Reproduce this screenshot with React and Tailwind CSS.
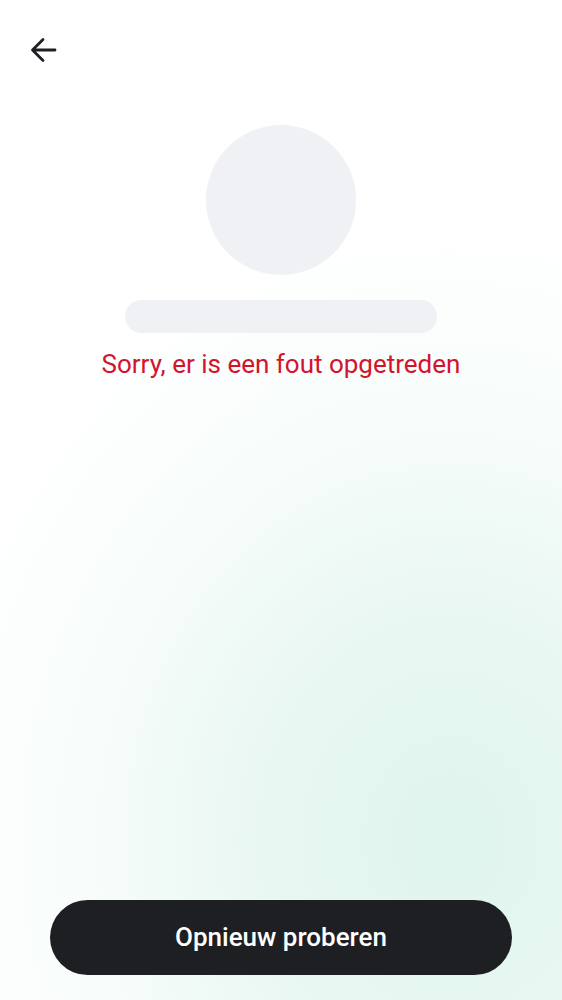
const BackArrow = () => (
  <svg width="28" height="28" viewBox="0 0 28 28" fill="none">
    <path
      d="M26 14H4M14 3.5 3.5 14 14 24.5"
      stroke="#1e1f23"
      strokeWidth="2.8"
      strokeLinecap="round"
      strokeLinejoin="round"
    />
  </svg>
);

export default function App() {
  return (
    <div
      className="w-full h-[1000px] flex flex-col bg-white bg-[radial-gradient(ellipse_95%_62%_at_80%_84%,#dff5ed_0%,#e8f7f2_35%,#f6fcfa_65%,#ffffff_100%)]"
      style={{ fontFamily: "Roboto, 'Noto Sans', sans-serif" }}
    >
      {/* Header */}
      <div className="pt-[36px] pl-[29px]">
        <button className="w-[28px] h-[28px] flex items-center justify-center">
          <BackArrow />
        </button>
      </div>

      {/* Profile placeholder */}
      <div className="flex flex-col items-center mt-[61px]">
        <div className="w-[150px] h-[150px] rounded-full bg-[#f0f1f5]" />
        <div className="w-[312px] h-[33px] rounded-full bg-[#f0f1f5] mt-[25px]" />
        <p className="mt-[16px] text-[26px] leading-[30px] text-[#d3142d]">
          Sorry, er is een fout opgetreden
        </p>
      </div>

      {/* Retry */}
      <div className="mt-auto px-[50px] pb-[25px]">
        <button className="w-full h-[75px] rounded-full bg-[#1e1f23] text-white text-[26px] font-medium">
          Opnieuw proberen
        </button>
      </div>
    </div>
  );
}
